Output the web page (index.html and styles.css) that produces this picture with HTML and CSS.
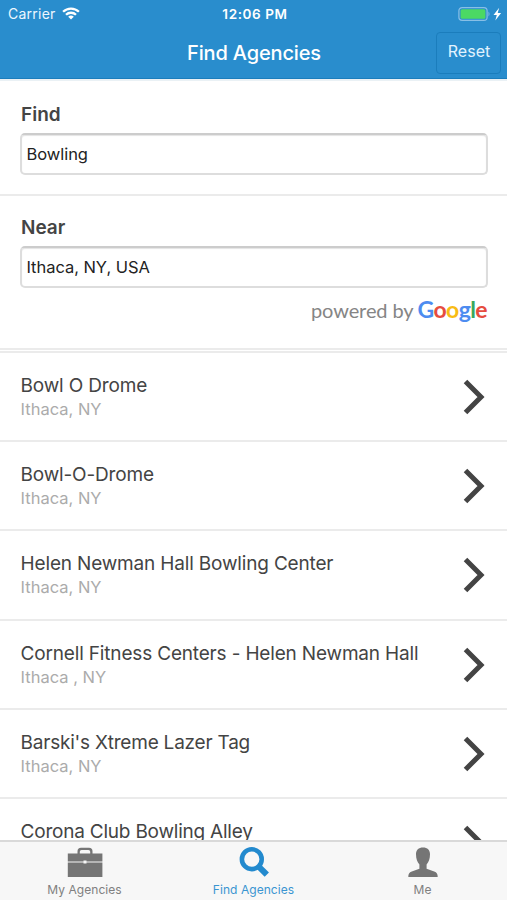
FILE: index.html
```html
<!DOCTYPE html>
<html lang="en">
<head>
<meta charset="utf-8">
<title>Find Agencies</title>
<link rel="stylesheet" href="styles.css">
</head>
<body>
<div class="app">
  <header class="header">
    <div class="status">
      <div class="carrier"><span>Carrier</span>
        <svg width="18" height="13" viewBox="0 0 18 13" fill="none" stroke="#fff" stroke-width="2.3"><path d="M1.1 4.8a11.2 11.2 0 0 1 15.8 0M4 7.8a7.1 7.1 0 0 1 10 0"/><path d="M9 12.5 6.2 9.8a4 4 0 0 1 5.6 0z" fill="#fff" stroke="none"/></svg>
      </div>
      <span class="clock">12:06 PM</span>
      <div class="power">
        <svg width="44" height="16" viewBox="0 0 44 16"><rect x=".9" y="1.6" width="28.2" height="12.8" rx="3.2" fill="none" stroke="#88bfe6" stroke-width="1.2"/><rect x="2.6" y="3.3" width="24.8" height="9.4" rx="1.5" fill="#4bd964"/><path d="M30.5 5.5q2 2.500 0 5z" fill="#88bfe6"/><path d="M41.200 1.800 35.500 8.900h3.300l-1.500 5.600 5.800-7.400h-3.400z" fill="#fff"/></svg>
      </div>
    </div>
    <div class="nav"><h1>Find Agencies</h1><button class="reset">Reset</button></div>
  </header>
  <main class="content">
    <section class="field find"><label for="find">Find</label><input id="find" value="Bowling"></section>
    <section class="field near"><label for="near">Near</label><input id="near" value="Ithaca, NY, USA">
      <div class="credit"><span class="powered">powered by</span><span class="google"><i class="b">G</i><i class="r">o</i><i class="y">o</i><i class="b">g</i><i class="g">l</i><i class="r">e</i></span></div>
    </section>
    <ul class="results">
      <li><div><h2>Bowl O Drome</h2><p>Ithaca, NY</p></div><svg class="chev" viewBox="0 0 22 36"><path d="M2.5 2.5 18 18 2.5 33.5"/></svg></li>
      <li><div><h2>Bowl-O-Drome</h2><p>Ithaca, NY</p></div><svg class="chev" viewBox="0 0 22 36"><path d="M2.5 2.5 18 18 2.5 33.5"/></svg></li>
      <li><div><h2>Helen Newman Hall Bowling Center</h2><p>Ithaca, NY</p></div><svg class="chev" viewBox="0 0 22 36"><path d="M2.5 2.5 18 18 2.5 33.5"/></svg></li>
      <li><div><h2>Cornell Fitness Centers - Helen Newman Hall</h2><p>Ithaca , NY</p></div><svg class="chev" viewBox="0 0 22 36"><path d="M2.5 2.5 18 18 2.5 33.5"/></svg></li>
      <li><div><h2 class="tight">Barski's Xtreme Lazer Tag</h2><p>Ithaca, NY</p></div><svg class="chev" viewBox="0 0 22 36"><path d="M2.5 2.5 18 18 2.5 33.5"/></svg></li>
      <li><div><h2 class="tight">Corona Club Bowling Alley</h2></div><svg class="chev" viewBox="0 0 22 36"><path d="M2.5 2.5 18 18 2.5 33.5"/></svg></li>
    </ul>
  </main>
  <nav class="tabs">
    <a><svg width="36" height="31" viewBox="0 0 36 31" fill="#757575"><path d="M10.500 7V4.200q0-3.500 3.500-3.500h8q3.500 0 3.500 3.500V7h-2.300V4.700q0-1.700-1.700-1.700h-7q-1.700 0-1.700 1.700V7z"/><path d="M.8 6.500h34.600v8H19.500v-1h-3v1H.8zM.8 15.500h15.700v1h3v-1h15.900V30H.8z"/></svg><span>My Agencies</span></a>
    <a class="active"><svg width="32" height="31" viewBox="0 0 32 31" fill="none" stroke="#238ace"><circle cx="13.800" cy="12.200" r="9.900" stroke-width="4.600"/><path d="m20.500 19.300 8.300 8.400" stroke-width="6"/></svg><span>Find Agencies</span></a>
    <a><svg width="32" height="31" viewBox="0 0 32 31" fill="#757575"><path d="M16 .5c4.500 0 7 2.700 7 6.800 0 5-1.300 7.800-3.400 10.200v4.300l7.600 2.800c2.600 1 3.500 2.600 3.500 5.400H1.300c0-2.800.9-4.400 3.500-5.400l7.600-2.800v-4.300C10.300 15.100 9 12.300 9 7.300 9 3.200 11.500.5 16 .5z"/></svg><span>Me</span></a>
  </nav>
</div>
</body>
</html>
```
FILE: styles.css
```css
* { box-sizing: border-box; margin: 0; padding: 0; }
body { font-family: Inter, "Liberation Sans", sans-serif; background: #fff; overflow: hidden; }
.app { width: 507px; height: 900px; display: flex; flex-direction: column; overflow: hidden; }
.header { height: 79px; flex: none; background: #298dcd; border-bottom: 1px solid #1b7dbc; color: #fff; }
.status { height: 27px; display: grid; grid-template-columns: 1fr auto 1fr; align-items: center; padding: 0 5px 0 8px; font-size: 14px; }
.carrier { display: flex; align-items: center; gap: 6px; letter-spacing: .25px; color: #edf7ff; }
.clock { font-weight: 600; font-size: 13.5px; letter-spacing: .6px; }
.power { display: flex; justify-content: flex-end; }
.nav { height: 51px; display: grid; grid-template-columns: 1fr auto 1fr; align-items: center; padding: 0 6px 0 7px; }
.nav h1 { grid-column: 2; font-size: 20px; font-weight: 500; line-height: 24px; letter-spacing: -.15px; }
.reset { justify-self: end; width: 65px; height: 42px; border: 1px solid #1b7dbc; border-radius: 4px; background: transparent; color: #e1f3ff; font: 16px Inter, sans-serif; padding: 0 0 3px 1px; }
.content { flex: 1; min-height: 0; overflow: hidden; border-top: 2px solid #eaf1f5; }
.field { padding: 0 19px 0 20px; border-bottom: 2px solid #ebebeb; }
.find { height: 114.6px; padding-top: 20.6px; }
.near { height: 154.4px; padding-top: 19.4px; }
label { display: block; padding-left: 1px; height: 31px; line-height: 26px; font-size: 19px; font-weight: 600; color: #444; }
input { display: block; width: 468px; height: 42px; border: 2px solid #ddd; border-top-color: #ccc; border-radius: 5px; box-shadow: inset 0 1px 1px #e4e4e4; font: 16.5px Inter, sans-serif; letter-spacing: -.05px; color: #222; padding: 0 4.5px; background: #fff; outline: none; }
.credit { display: flex; justify-content: flex-end; align-items: baseline; gap: 4px; height: 34px; line-height: 43px; padding-right: 1px; font-family: Lato, sans-serif; }
.powered { font-size: 20px; letter-spacing: -.1px; color: #858585; }
.google { font-size: 23px; font-weight: 700; letter-spacing: -.6px; }
.google i { font-style: normal; }
.b { color: #4d8cf0; } .r { color: #e64c40; } .y { color: #f8bc15; } .g { color: #3aa85b; }
.results { list-style: none; margin-top: 1px; border-top: 2px solid #ebebeb; }
.results li { height: 89.2px; display: flex; justify-content: space-between; padding: 20px 22px 0 20.6px; border-bottom: 2px solid #ebebeb; }
h2 { font-size: 19px; line-height: 25px; font-weight: 400; color: #444; white-space: nowrap; letter-spacing: -.17px; }
.tight { letter-spacing: -.22px; }
.results p { font-size: 16.5px; line-height: 23px; color: #ababab; }
.chev { width: 22px; height: 36px; margin-top: 6px; fill: none; stroke: #444; stroke-width: 5; }
.tabs { flex: none; height: 60px; border-top: 2px solid #d9d9d9; background: #f7f7f7; display: grid; grid-template-columns: repeat(3, 1fr); }
.tabs a { display: flex; flex-direction: column; align-items: center; padding-top: 5px; font-size: 12px; line-height: 24px; letter-spacing: .06px; color: #808080; }
.tabs svg { display: block; }
.tabs .active { color: #3a95d1; }
```
